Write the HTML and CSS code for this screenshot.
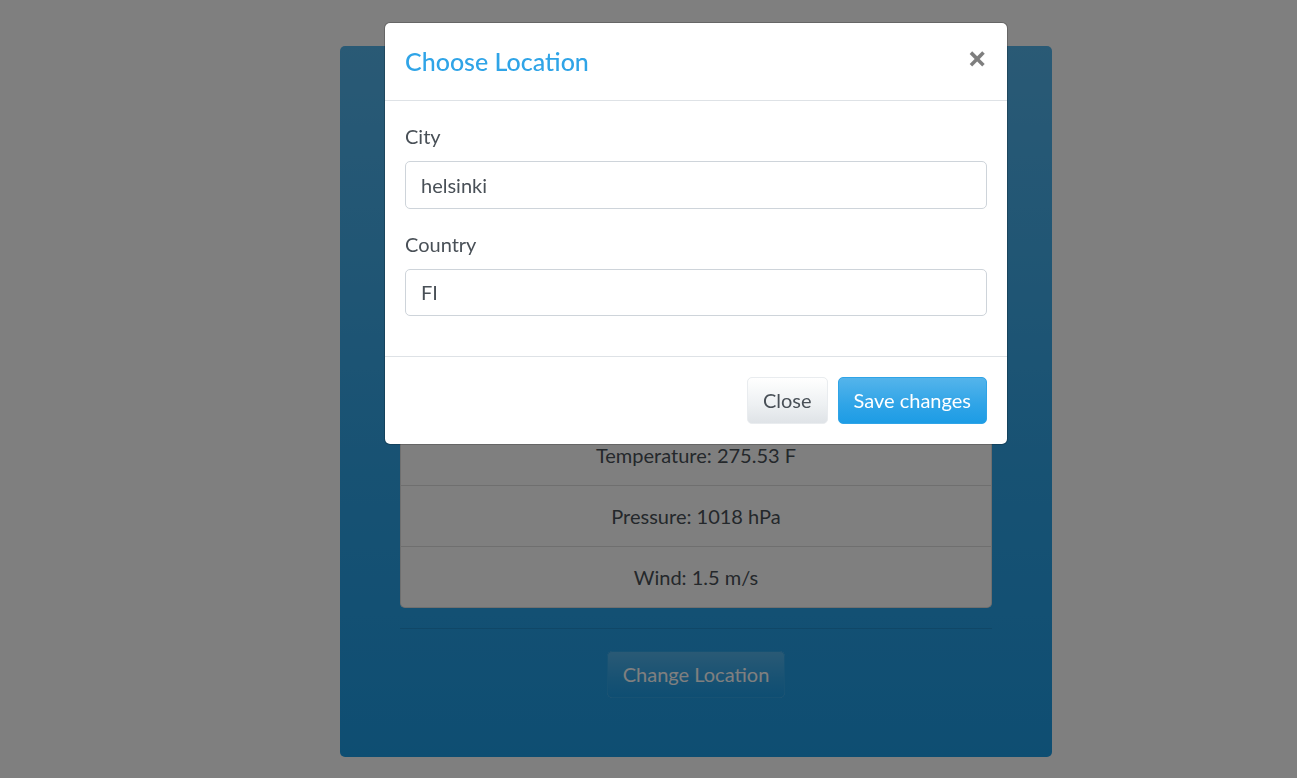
FILE: index.html
```html
<!DOCTYPE html>
<html lang="en">
<head>
<meta charset="utf-8">
<title>Weather</title>
<link rel="stylesheet" href="styles.css">
</head>
<body>
<div class="page">
  <div class="card">
    <div class="summary">
      <h1 class="city">Helsinki, FI</h1>
      <div class="desc">Clear sky</div>
    </div>
    <ul class="list-group">
      <li class="list-item">Temperature: 275.53 F</li>
      <li class="list-item">Pressure: 1018 hPa</li>
      <li class="list-item">Wind: 1.5 m/s</li>
    </ul>
    <hr class="divider">
    <div class="actions">
      <button class="btn btn-primary" type="button">Change Location</button>
    </div>
  </div>
</div>

<div class="backdrop"></div>

<div class="modal">
  <div class="modal-dialog">
    <div class="modal-header">
      <h5 class="modal-title">Choose Location</h5>
      <button class="close" type="button" aria-label="Close">&times;</button>
    </div>
    <div class="modal-body">
      <div class="form-group">
        <label class="label" for="city">City</label>
        <input class="input" id="city" type="text" value="helsinki">
      </div>
      <div class="form-group">
        <label class="label" for="country">Country</label>
        <input class="input" id="country" type="text" value="FI">
      </div>
    </div>
    <div class="modal-footer">
      <button class="btn btn-secondary" type="button">Close</button>
      <button class="btn btn-primary" type="button">Save changes</button>
    </div>
  </div>
</div>
</body>
</html>
```

FILE: styles.css
```css
* { box-sizing: border-box; }

html, body {
  margin: 0;
  padding: 0;
  overflow: hidden;
  height: 100%;
}

body {
  background: #ffffff;
  font-family: "Lato", "Open Sans", sans-serif;
  font-size: 20px;
  line-height: 30px;
  color: #495057;
}

.page {
  padding-left: 95px;
  padding-top: 46px;
  display: flex;
  justify-content: center;
}

.card {
  width: 712px;
  height: 711px;
  border-radius: 5px;
  padding: 25px 60px 0;
  background-image: linear-gradient(#54b4eb, #2fa4e7 60%, #1d9ce5);
  color: #ffffff;
  display: flex;
  flex-direction: column;
}

.summary {
  height: 353px;
  display: flex;
  flex-direction: column;
  align-items: center;
  gap: 10px;
}

.city {
  margin: 20px 0 0;
  font-size: 40px;
  line-height: 48px;
  font-weight: 500;
}

.desc { font-size: 24px; }

.list-group {
  list-style: none;
  margin: 0;
  padding: 0;
  background: #ffffff;
  border-radius: 5px;
  color: #495057;
}

.list-item {
  padding: 15px 25px;
  text-align: center;
  border: 1px solid rgba(0, 0, 0, 0.125);
  border-bottom: 0;
}

.list-item:first-child { border-radius: 5px 5px 0 0; }
.list-item:last-child {
  border-bottom: 1px solid rgba(0, 0, 0, 0.125);
  border-radius: 0 0 5px 5px;
}

.divider {
  margin: 20px 0 0;
  border: 0;
  border-top: 1px solid rgba(0, 0, 0, 0.1);
}

.actions {
  display: flex;
  justify-content: center;
  margin-top: 22px;
}

.btn {
  font-family: inherit;
  font-size: 20px;
  line-height: 30px;
  padding: 7px 15px 8px;
  border-radius: 5px;
  border: 1px solid transparent;
  cursor: pointer;
}

.btn-primary {
  color: #ffffff;
  background-image: linear-gradient(#54b4eb, #2fa4e7 60%, #1d9ce5);
  border-color: #2fa4e7;
}

.btn-secondary {
  color: #495057;
  background-image: linear-gradient(#ffffff, #edf0f2 60%, #dfe3e7);
  border-color: #e9ecef;
}

.backdrop {
  position: fixed;
  inset: 0;
  background: rgba(0, 0, 0, 0.5);
}

.modal {
  position: fixed;
  top: 0;
  left: 0;
  right: 0;
  padding-left: 95px;
  padding-top: 22px;
  display: flex;
  justify-content: center;
}

.modal-dialog {
  width: 624px;
  background: #ffffff;
  border: 1px solid rgba(0, 0, 0, 0.2);
  border-radius: 6px;
  background-clip: padding-box;
}

.modal-header {
  display: flex;
  align-items: flex-start;
  justify-content: space-between;
  padding: 20px;
  border-bottom: 1px solid #dee2e6;
}

.modal-title {
  margin: 0;
  font-size: 25px;
  line-height: 37px;
  font-weight: 500;
  color: #2fa4e7;
}

.close {
  margin: -20px -20px -20px auto;
  padding: 20px;
  background: transparent;
  border: 0;
  font-family: "Open Sans", sans-serif;
  font-size: 34px;
  font-weight: 700;
  line-height: 30px;
  color: #000000;
  opacity: 0.5;
  cursor: pointer;
}

.modal-body {
  padding: 20px;
}

.form-group {
  margin-bottom: 20px;
  display: flex;
  flex-direction: column;
}

.label {
  margin-bottom: 10px;
}

.input {
  height: 47.5px;
  padding: 7.5px 15px;
  font-family: inherit;
  font-size: 20px;
  line-height: 30px;
  color: #495057;
  border: 1px solid #ced4da;
  border-radius: 5px;
  background: #ffffff;
}

.modal-footer {
  display: flex;
  justify-content: flex-end;
  align-items: center;
  gap: 10px;
  padding: 20px;
  border-top: 1px solid #dee2e6;
}
```
